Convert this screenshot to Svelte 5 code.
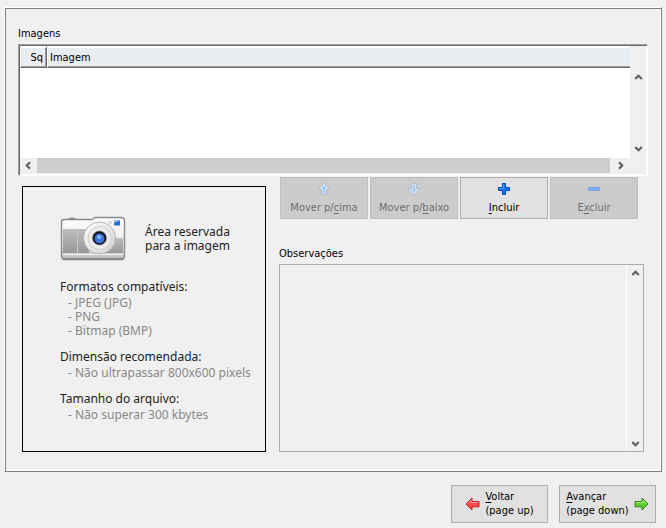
<script>
  const columns = [
    { label: "Sq", cls: "seq" },
    { label: "Imagem", cls: "name" },
  ];

  const actions = [
    { icon: "up", before: "Mover p/", key: "c", after: "ima", disabled: true },
    { icon: "down", before: "Mover p/", key: "b", after: "aixo", disabled: true },
    { icon: "plus", before: "", key: "I", after: "ncluir", disabled: false },
    { icon: "minus", before: "E", key: "x", after: "cluir", disabled: true },
  ];

  const hints = [
    { title: "Formatos compatíveis:", items: ["JPEG (JPG)", "PNG", "Bitmap (BMP)"] },
    { title: "Dimensão recomendada:", items: ["Não ultrapassar 800x600 pixels"] },
    { title: "Tamanho do arquivo:", items: ["Não superar 300 kbytes"] },
  ];

  let notes = $state("");
</script>

{#snippet chevron(dir)}
  <svg class="chevron chevron--{dir}" width="9" height="9" viewBox="0 0 9 9" aria-hidden="true">
    <path d="M1.2 6 4.5 2.8 7.8 6" fill="none" stroke="#606060" stroke-width="2.2" />
  </svg>
{/snippet}

{#snippet actionIcon(name)}
  <svg width="14" height="14" viewBox="0 0 14 14" aria-hidden="true">
    {#if name === "up"}
      <path d="M7 1.2 13 7.4H9.7V12.2H4.3V7.4H1Z" fill="#e1edfa" stroke="#a9b4cc" />
      <path d="M7 3.2 10 6.5H8.3V11H5.7V6.5H4Z" fill="#a3cbf3" />
    {:else if name === "down"}
      <path d="M7 12.8 13 6.6H9.7V1.8H4.3V6.6H1Z" fill="#e1edfa" stroke="#a9b4cc" />
      <path d="M7 10.8 10 7.5H8.3V3H5.7V7.5H4Z" fill="#a3cbf3" />
    {:else if name === "plus"}
      <path d="M5.5 1.5h3v4h4v3h-4v4h-3v-4h-4v-3h4z" fill="#1675fa" stroke="#0648b8" />
      <path d="M6.5 2.5v4h-4" fill="none" stroke="#4fa0ff" />
    {:else}
      <path d="M1.5 5.5h11v3h-11z" fill="#80b2fa" stroke="#78a2df" />
    {/if}
  </svg>
{/snippet}

<main class="page">
  <section class="group">
    <h2 class="caption" id="images-caption">Imagens</h2>

    <div class="list">
      <div class="list__row">
        <div class="list__view">
          <table class="table" aria-labelledby="images-caption">
            <thead>
              <tr>
                {#each columns as col}
                  <th class="table__{col.cls}">{col.label}</th>
                {/each}
              </tr>
            </thead>
            <tbody></tbody>
          </table>
        </div>
        <div class="vbar vbar--list">
          <button type="button" class="arrow" aria-label="Rolar para cima">{@render chevron("up")}</button>
          <button type="button" class="arrow" aria-label="Rolar para baixo">{@render chevron("down")}</button>
        </div>
      </div>
      <div class="hbar">
        <button type="button" class="arrow" aria-label="Rolar para a esquerda">{@render chevron("left")}</button>
        <div class="hbar__thumb"></div>
        <button type="button" class="arrow" aria-label="Rolar para a direita">{@render chevron("right")}</button>
      </div>
    </div>

    <div class="details">
      <div class="preview">
        <div class="preview__head">
          <svg width="66" height="46" viewBox="0 0 66 46" aria-hidden="true">
            <defs>
              <linearGradient id="body" x1="0" y1="0" x2="0" y2="1">
                <stop offset="0" stop-color="#fff" />
                <stop offset="0.75" stop-color="#e4e4e4" />
                <stop offset="1" stop-color="#b5b5b5" />
              </linearGradient>
              <linearGradient id="grip" x1="0" y1="0" x2="0" y2="1">
                <stop offset="0" stop-color="#bdbdbd" />
                <stop offset="1" stop-color="#989898" />
              </linearGradient>
              <linearGradient id="ring" x1="0" y1="0" x2="1" y2="1">
                <stop offset="0" stop-color="#fff" />
                <stop offset="1" stop-color="#cfcfcf" />
              </linearGradient>
            </defs>
            <path d="M7 4.5Q8 1.5 12 1.5Q16 1.5 17 4.5Z" fill="#8d8d8d" />
            <path
              d="M4 3.5H32L35 1.5H61Q64.5 1.5 64.5 5V40Q64.5 43.5 61 43.5H5Q1.5 43.5 1.5 40V6Q1.5 3.5 4 3.5Z"
              fill="url(#body)"
              stroke="#8a878e"
              stroke-width="1.4"
            />
            <path d="M3 13H29V37H3Z" fill="url(#grip)" />
            <path d="M50 22H63V37H42Z" fill="url(#grip)" />
            <path d="M17.5 13V37" stroke="#c8c8c8" />
            <path d="M3 38.5H63" stroke="#f2f2f2" />
            <path d="M4 42.5H62" stroke="#858585" />
            <circle cx="39.5" cy="22" r="16" fill="url(#ring)" stroke="#b4b4b4" />
            <circle cx="39.5" cy="22" r="11.5" fill="#ececec" stroke="#cdcdcd" />
            <circle cx="39.5" cy="22" r="7" fill="#171b25" stroke="#777" stroke-width="0.6" />
            <circle cx="39.5" cy="22.5" r="4.8" fill="#3974dd" />
            <circle cx="39" cy="21" r="2" fill="#8cb7fa" />
            <circle cx="50" cy="6.5" r="1.5" fill="#eee" stroke="#bbb" stroke-width="0.6" />
            <path d="M54 4.5H60V9.5H54Z" fill="#2b68d0" />
            <path d="M54 7 60 4.5H54Z" fill="#8bb5f7" />
          </svg>
          <p class="preview__title">Área reservada<br />para a imagem</p>
        </div>
        {#each hints as hint}
          <div class="hint">
            <h3 class="hint__title">{hint.title}</h3>
            <ul class="hint__list">
              {#each hint.items as item}
                <li>- {item}</li>
              {/each}
            </ul>
          </div>
        {/each}
      </div>

      <div class="side">
        <div class="actions">
          {#each actions as action}
            <button type="button" class="btn btn--action" disabled={action.disabled}>
              {@render actionIcon(action.icon)}
              <span>{action.before}<u>{action.key}</u>{action.after}</span>
            </button>
          {/each}
        </div>

        <label class="caption" for="notes">Observações</label>
        <div class="memo">
          <textarea id="notes" class="memo__input" bind:value={notes}></textarea>
          <div class="vbar vbar--memo">
            <button type="button" class="arrow" aria-label="Rolar para cima">{@render chevron("up")}</button>
            <button type="button" class="arrow" aria-label="Rolar para baixo">{@render chevron("down")}</button>
          </div>
        </div>
      </div>
    </div>
  </section>

  <nav class="nav">
    <button type="button" class="btn btn--nav">
      <svg width="15" height="14" viewBox="0 0 15 14" aria-hidden="true">
        <path d="M1 7 7 1V4.5H14V9.8H7V13Z" fill="#f8494d" stroke="#c71a20" stroke-linejoin="round" />
        <path d="M2.6 6.8 6.2 3.3V5.5H13" fill="none" stroke="#ff9b9b" />
      </svg>
      <span><u>V</u>oltar<br />(page up)</span>
    </button>
    <button type="button" class="btn btn--nav">
      <span><u>A</u>vançar<br />(page down)</span>
      <svg width="15" height="14" viewBox="0 0 15 14" aria-hidden="true">
        <path d="M14 7 8 1V4.5H1V9.8H8V13Z" fill="#5fd02c" stroke="#32831a" stroke-linejoin="round" />
        <path d="M2 5.5H9V3.3L12.4 6.8" fill="none" stroke="#a5ee7c" />
      </svg>
    </button>
  </nav>
</main>

<style>
  :global(body) {
    background: #f0f0f0;
  }

  .page {
    padding: 7px 4px 5px;
    font-family: Tahoma, "DejaVu Sans Condensed", sans-serif;
    font-size: 11px;
    line-height: 14px;
    color: #000;
  }

  .group {
    padding: 19px 13px 19px;
    border: 1px solid;
    border-color: #fff #808080 #808080 #fff;
    box-shadow:
      inset 1px 1px #808080,
      inset -1px -1px #fff;
  }

  .caption {
    display: block;
    margin: 0;
    font-size: 11px;
    font-weight: 400;
    line-height: 14px;
  }

  .list {
    margin-top: 3px;
    border: 1px solid;
    border-color: #a0a0a0 #fff #fff #a0a0a0;
    box-shadow:
      inset 1px 1px #696969,
      inset -1px -1px #fff;
    padding: 1px;
  }

  .list__row {
    display: flex;
    height: 112px;
  }

  .list__view {
    flex: 1;
    background: #fff;
  }

  .table {
    width: 100%;
    border-collapse: separate;
    border-spacing: 0;
  }

  .table th {
    height: 19px;
    padding: 0 3px;
    background: #e9edf1;
    border-top: 2px solid #fff;
    border-bottom: 1px solid #696969;
    box-shadow: inset 0 -1px #a0a0a0;
    font-weight: 400;
    text-align: left;
  }

  .table .table__seq {
    width: 19px;
    border-left: 1px solid #fff;
    border-right: 1px solid #696969;
    box-shadow: inset -1px -1px #a0a0a0;
    text-align: right;
  }

  .table .table__name {
    padding-left: 2px;
    border-left: 1px solid #fff;
  }

  .arrow {
    display: flex;
    align-items: center;
    justify-content: center;
    width: 16px;
    height: 16px;
    padding: 0;
    border: none;
    background: #f0f0f0;
  }

  .vbar {
    display: flex;
    flex-direction: column;
    justify-content: space-between;
    background: #f0f0f0;
  }

  .vbar--list {
    padding: 23px 0 2px;
  }

  .vbar--memo {
    border-left: 1px solid #fff;
  }

  .hbar {
    display: flex;
    padding: 0 18px 1px 0;
    background: #f0f0f0;
  }

  .hbar__thumb {
    flex: 1;
    height: 15px;
    margin: 0 2px 0 1px;
    background: #cdcdcd;
  }

  .hbar .arrow {
    height: 15px;
  }

  .chevron--down {
    transform: rotate(180deg);
  }

  .chevron--left {
    transform: rotate(-90deg);
  }

  .chevron--right {
    transform: rotate(90deg);
  }

  .details {
    display: flex;
    align-items: flex-end;
    gap: 13px;
    padding: 1px 4px 0;
  }

  .preview {
    display: flex;
    flex-direction: column;
    gap: 11px;
    box-sizing: border-box;
    width: 244px;
    height: 266px;
    padding: 29px 0 0 37px;
    border: 1px solid #000;
    color: #222;
    font-family: "Segoe UI", "Noto Sans", sans-serif;
    font-size: 12px;
  }

  .preview__head {
    display: flex;
    align-items: center;
    gap: 19px;
    margin-bottom: 6px;
  }

  .preview__title {
    margin: 0;
  }

  .hint__title {
    margin: 0 0 1px;
    font-size: 12px;
    font-weight: 400;
    line-height: 16px;
  }

  .hint__list {
    margin: 0;
    padding: 0 0 0 8px;
    list-style: none;
    white-space: nowrap;
    color: #888;
  }

  .side {
    flex: 1;
    min-width: 0;
  }

  .actions {
    display: flex;
    gap: 2px;
    margin: 0 6px 28px 1px;
  }

  .btn {
    display: flex;
    align-items: center;
    justify-content: center;
    padding: 0;
    border: 1px solid #adadad;
    background: #e1e1e1;
    color: #000;
    font: inherit;
  }

  .btn:disabled {
    border-color: #bfbfbf;
    background: #ccc;
    color: #6d6d6d;
  }

  .btn u {
    text-underline-offset: 2px;
  }

  .btn--action {
    flex: 1;
    flex-direction: column;
    gap: 5px;
    height: 42px;
  }

  .memo {
    display: flex;
    height: 186px;
    margin-top: 3px;
    border: 1px solid #abadb3;
  }

  .memo__input {
    flex: 1;
    min-width: 0;
    padding: 2px 4px;
    border: none;
    outline: none;
    background: #f0f0f0;
    font: inherit;
    resize: none;
  }

  .nav {
    display: flex;
    justify-content: flex-end;
    gap: 11px;
    padding: 13px 6px 0;
  }

  .btn--nav {
    gap: 5px;
    width: 97px;
    height: 38px;
    text-align: left;
  }
</style>
